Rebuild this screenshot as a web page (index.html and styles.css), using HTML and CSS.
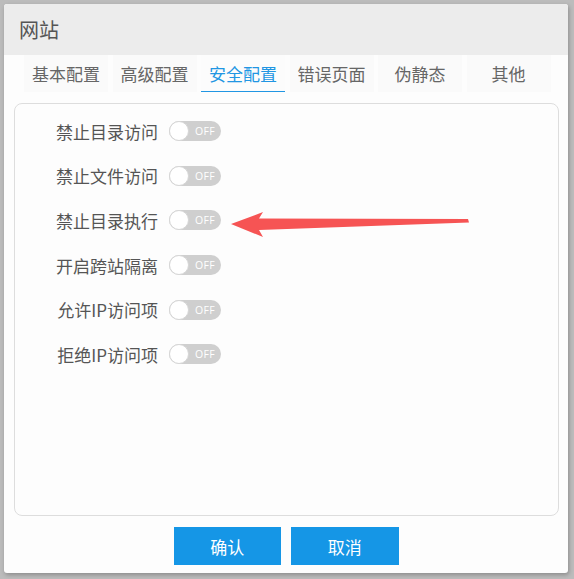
FILE: index.html
```html
<!DOCTYPE html>
<html lang="zh-CN">
<head>
<meta charset="utf-8">
<title>网站</title>
<link rel="stylesheet" href="styles.css">
</head>
<body>
<div class="dialog">
  <div class="header">网站</div>
  <div class="tabs">
    <div class="tab">基本配置</div>
    <div class="tab">高级配置</div>
    <div class="tab active">安全配置</div>
    <div class="tab">错误页面</div>
    <div class="tab">伪静态</div>
    <div class="tab">其他</div>
  </div>
  <div class="panel">
    <div class="row"><span class="label">禁止目录访问</span><span class="switch"><span class="knob"></span><span class="off">OFF</span></span></div>
    <div class="row"><span class="label">禁止文件访问</span><span class="switch"><span class="knob"></span><span class="off">OFF</span></span></div>
    <div class="row"><span class="label">禁止目录执行</span><span class="switch"><span class="knob"></span><span class="off">OFF</span></span></div>
    <div class="row"><span class="label">开启跨站隔离</span><span class="switch"><span class="knob"></span><span class="off">OFF</span></span></div>
    <div class="row"><span class="label">允许IP访问项</span><span class="switch"><span class="knob"></span><span class="off">OFF</span></span></div>
    <div class="row"><span class="label">拒绝IP访问项</span><span class="switch"><span class="knob"></span><span class="off">OFF</span></span></div>
  </div>
  <div class="actions">
    <button class="btn">确认</button>
    <button class="btn">取消</button>
  </div>
</div>
<svg class="arrow" width="574" height="579" viewBox="0 0 574 579">
  <polygon points="231,224 263,212 259,218.5 468,219 469,222.5 259,230 263,237" fill="#f65454"/>
</svg>
</body>
</html>
```
FILE: styles.css
```css
html, body {
  margin: 0;
  padding: 0;
}
body {
  width: 574px;
  height: 579px;
  background: #bcbcbc;
  font-family: "Noto Sans CJK SC", "Microsoft YaHei", sans-serif;
  position: relative;
  overflow: hidden;
  padding: 4px 0 0 4px;
  box-sizing: border-box;
}
.dialog {
  width: 564px;
  height: 569px;
  background: #fdfdfd;
  border-radius: 3px;
  box-shadow: 1px 2px 4px rgba(0,0,0,0.25);
  display: flex;
  flex-direction: column;
  overflow: hidden;
}
.header {
  height: 51px;
  background: #ececec;
  color: #555;
  font-size: 20px;
  line-height: 51px;
  padding-left: 15px;
  box-sizing: border-box;
}
.tabs {
  display: flex;
  gap: 4.5px;
  margin-left: 20px;
  height: 37px;
}
.tab {
  width: 84px;
  height: 37px;
  background: #fafafa;
  color: #666;
  font-size: 17px;
  line-height: 37px;
  text-align: center;
  box-sizing: border-box;
}
.tab.active {
  color: #2196e3;
  border-bottom: 1.5px solid #2196e3;
  background: #fcfcfc;
}
.panel {
  margin: 11px 0 0 10px;
  width: 545px;
  height: 413px;
  border: 1px solid #dddddd;
  border-radius: 8px;
  box-sizing: border-box;
  padding-top: 5px;
}
.row {
  display: flex;
  align-items: center;
  height: 44.6px;
}
.label {
  width: 143px;
  text-align: right;
  font-size: 17px;
  color: #555;
  white-space: nowrap;
}
.switch {
  margin-left: 11px;
  width: 52px;
  height: 20px;
  border-radius: 10px;
  background: #cfcfcf;
  position: relative;
  display: flex;
  align-items: center;
}
.knob {
  position: absolute;
  left: 0;
  top: 0;
  width: 18px;
  height: 18px;
  border-radius: 50%;
  background: #fff;
  border: 1px solid #d6d6d6;
}
.off {
  margin-left: 26px;
  color: #fff;
  font-family: "Open Sans", "Liberation Sans", sans-serif;
  font-size: 10.5px;
  letter-spacing: 0.3px;
}
.actions {
  display: flex;
  justify-content: center;
  gap: 10px;
  margin-top: 11px;
}
.btn {
  width: 107.5px;
  height: 38px;
  border: none;
  background: #1596e6;
  color: #fff;
  font-family: "Noto Sans CJK SC", sans-serif;
  font-size: 17px;
  padding: 0;
}
.arrow {
  position: absolute;
  left: 0;
  top: 0;
  pointer-events: none;
}
```
